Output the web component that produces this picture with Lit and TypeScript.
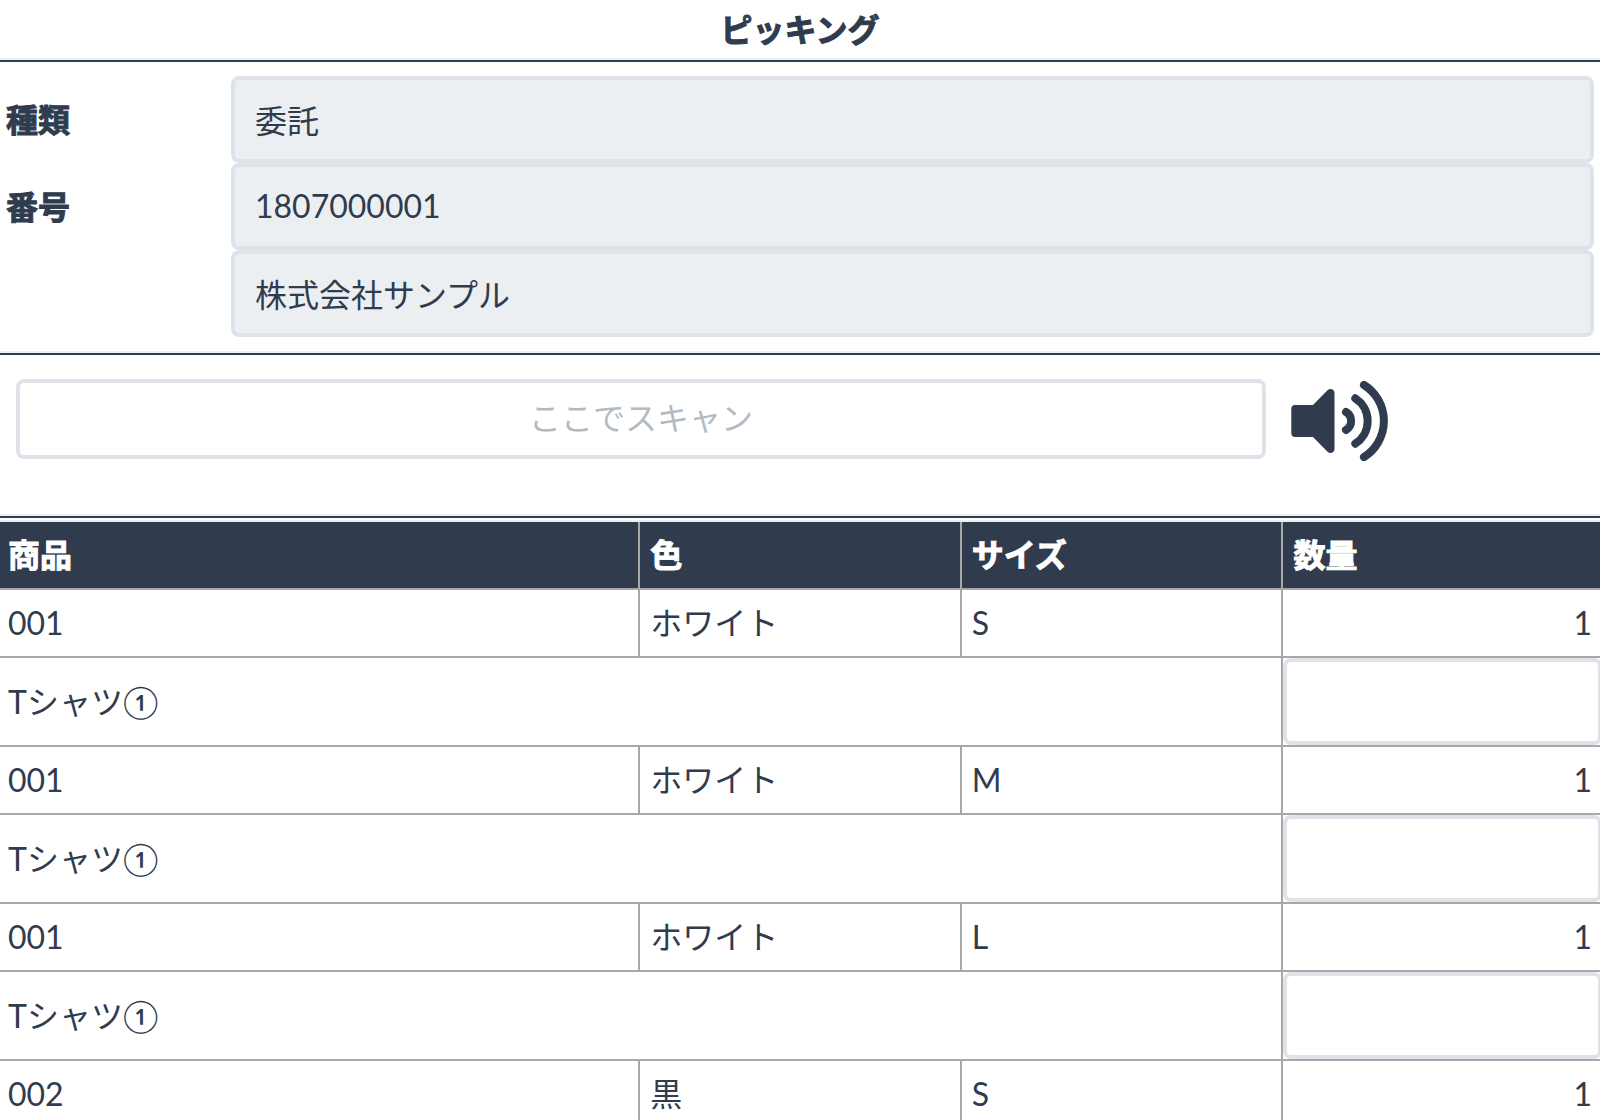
import { LitElement, html, css } from "lit";
import { customElement, property, state } from "lit/decorators.js";

interface PickLine {
  code: string;
  name: string;
  color: string;
  size: string;
  quantity: number;
}

interface Field {
  id: string;
  label: string;
  ariaLabel: string;
  value: string;
}

@customElement("sound-icon")
class SoundIcon extends LitElement {
  static styles = css`
    :host {
      display: block;
    }
    .icon {
      display: block;
      width: 98px;
      height: 80px;
    }
  `;

  render() {
    return html`
      <svg class="icon" viewBox="0 0 98 80" aria-hidden="true">
        <path
          fill="currentColor"
          d="M4 24H22L36.500 9.200C39 6.800 43.500 8 43.500 12V68C43.500 72 39 73.200 36.500 70.800L22 56H4Q0.300 56 0.300 52V28Q0.300 24 4 24Z"
        />
        <g fill="none" stroke="currentColor" stroke-width="8" stroke-linecap="round">
          <path d="M55 31A10.500 10.500 0 0 1 55 49" />
          <path d="M64.300 17.300A27 27 0 0 1 64.300 62.700" />
          <path d="M73 4A42.500 42.500 0 0 1 73 76" />
        </g>
      </svg>
    `;
  }
}

@customElement("pick-table")
class PickTable extends LitElement {
  @property({ attribute: false }) lines: PickLine[] = [];

  static styles = css`
    :host {
      display: block;
      overflow: hidden;
    }
    .table {
      width: calc(100% + 8px);
      margin-left: -5px;
      table-layout: fixed;
      border-collapse: separate;
      border-spacing: 0;
    }
    .wide {
      width: 40%;
    }
    .narrow {
      width: 20%;
    }
    .head,
    .cell {
      box-sizing: border-box;
      height: 68px;
      padding: 0 10px;
      border-left: 2px solid #a8a8a8;
      border-bottom: 2px solid #a8a8a8;
      line-height: 48px;
      text-align: left;
      font-weight: 400;
    }
    .head {
      background: #303c4e;
      color: #fff;
      font-weight: 700;
      -webkit-text-stroke: 1px currentColor;
    }
    .head:first-child,
    .cell:first-child {
      padding-left: 11px;
    }
    .cell:last-child {
      border-right: 1px solid #a8a8a8;
    }
    .name {
      height: 89px;
    }
    .number {
      text-align: right;
    }
    .cell.entry {
      height: 89px;
      padding: 0;
    }
    .quantity {
      display: block;
      box-sizing: border-box;
      width: 100%;
      height: 87px;
      margin: 0;
      padding: 0 20px;
      border: 4px solid #dee3ea;
      border-radius: 8px;
      background: #fff;
      color: inherit;
      font: inherit;
      text-align: right;
    }
  `;

  render() {
    return html`
      <table class="table">
        <colgroup>
          <col class="wide" />
          <col class="narrow" />
          <col class="narrow" />
          <col class="narrow" />
        </colgroup>
        <thead>
          <tr>
            <th class="head" scope="col">商品</th>
            <th class="head" scope="col">色</th>
            <th class="head" scope="col">サイズ</th>
            <th class="head" scope="col">数量</th>
          </tr>
        </thead>
        <tbody>
          ${this.lines.map(
            (line) => html`
              <tr>
                <td class="cell">${line.code}</td>
                <td class="cell">${line.color}</td>
                <td class="cell">${line.size}</td>
                <td class="cell number">${line.quantity}</td>
              </tr>
              ${line.name
                ? html`<tr>
                    <td class="cell name" colspan="3">${line.name}</td>
                    <td class="cell entry">
                      <input
                        class="quantity"
                        type="text"
                        inputmode="numeric"
                        aria-label="数量 ${line.code} ${line.size}"
                      />
                    </td>
                  </tr>`
                : null}
            `
          )}
        </tbody>
      </table>
    `;
  }
}

@customElement("app-root")
class AppRoot extends LitElement {
  @state() private fields: Field[] = [
    { id: "kind", label: "種類", ariaLabel: "種類", value: "委託" },
    { id: "number", label: "番号", ariaLabel: "番号", value: "1807000001" },
    { id: "company", label: "", ariaLabel: "会社", value: "株式会社サンプル" },
  ];

  @state() private lines: PickLine[] = [
    { code: "001", name: "Tシャツ①", color: "ホワイト", size: "S", quantity: 1 },
    { code: "001", name: "Tシャツ①", color: "ホワイト", size: "M", quantity: 1 },
    { code: "001", name: "Tシャツ①", color: "ホワイト", size: "L", quantity: 1 },
    { code: "002", name: "", color: "黒", size: "S", quantity: 1 },
  ];

  static styles = css`
    :host {
      display: block;
      height: 100vh;
      overflow: auto;
      scrollbar-width: none;
      background: #fff;
      color: #303c4e;
      font-family: Lato, "Noto Sans CJK JP", sans-serif;
      font-size: 32px;
      line-height: 48px;
    }
    .bar,
    .fields,
    .scan {
      border-bottom: 2px solid #303c4e;
      box-shadow: inset 0 -2px #ebeff2;
    }
    .bar {
      padding: 6px 0;
    }
    .title {
      margin: 0;
      font-size: 32px;
      line-height: 48px;
      font-weight: 700;
      text-align: center;
      -webkit-text-stroke: 1px currentColor;
    }
    .fields {
      padding: 14px 6px 16px;
    }
    .field {
      display: grid;
      grid-template-columns: 225px 1fr;
      align-items: center;
    }
    .label {
      font-weight: 700;
      -webkit-text-stroke: 1px currentColor;
    }
    .value,
    .code {
      box-sizing: border-box;
      width: 100%;
      min-width: 0;
      margin: 0;
      border: 4px solid #dee3ea;
      border-radius: 8px;
      color: inherit;
      font: inherit;
      outline: none;
    }
    .value {
      grid-column: 2;
      height: 87px;
      padding: 0 20px 2px;
      background: #ebeff1;
    }
    .scan {
      display: grid;
      grid-template-columns: 64fr 15fr;
      column-gap: 25px;
      padding: 24px 16px 55px;
    }
    .code {
      height: 80px;
      padding: 0 20px 4px;
      background: #fff;
      text-align: center;
    }
    .code::placeholder {
      color: #b2bac3;
      opacity: 1;
    }
    .sound {
      justify-self: start;
      align-self: start;
      margin: 0;
      padding: 2px 0 0;
      border: 0;
      background: none;
      color: inherit;
      cursor: pointer;
    }
    .list {
      margin-top: 2px;
      border-top: 2px solid #ebeff2;
    }
  `;

  render() {
    return html`
      <header class="bar"><h1 class="title">ピッキング</h1></header>
      <section class="fields">
        ${this.fields.map(
          (field) => html`
            <div class="field">
              ${field.label
                ? html`<label class="label" for=${field.id}>${field.label}</label>`
                : null}
              <input
                class="value"
                id=${field.id}
                type="text"
                readonly
                aria-label=${field.ariaLabel}
                .value=${field.value}
              />
            </div>
          `
        )}
      </section>
      <section class="scan">
        <input class="code" type="text" placeholder="ここでスキャン" aria-label="ここでスキャン" />
        <button class="sound" type="button" aria-label="音声">
          <sound-icon></sound-icon>
        </button>
      </section>
      <main class="list">
        <pick-table .lines=${this.lines}></pick-table>
      </main>
    `;
  }
}
